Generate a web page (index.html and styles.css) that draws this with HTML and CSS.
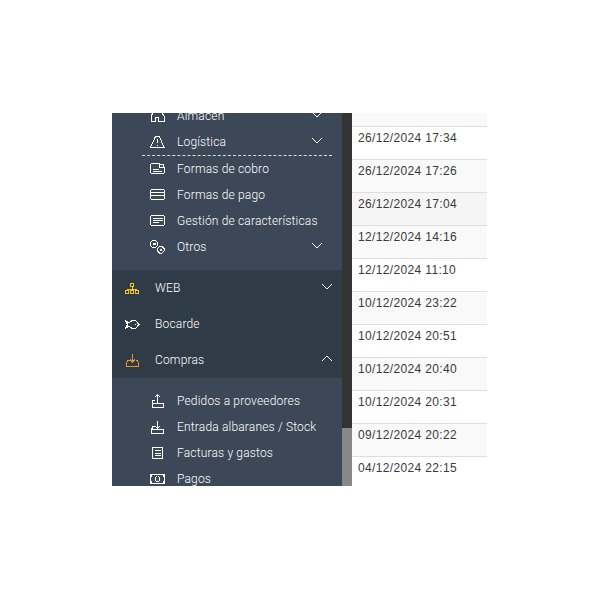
FILE: index.html
```html
<!DOCTYPE html>
<html lang="es">
<head>
    <meta charset="UTF-8">
    <meta name="viewport" content="width=device-width, initial-scale=1.0">
    <title>Menú</title>
    <link rel="stylesheet" href="styles.css">
</head>
<body>
    <div class="frame">
        <!-- Sidebar -->
        <div class="sidebar">
            <ul class="menu sub sub-first">
                <li><svg class="ico" viewBox="0 0 15 15"><path d="M3.500 3.500 1 7v5.500h4.500v-4h3v4H14V7l-2.500-3.500zM3.500 3.500h8"/></svg><span class="label">Almacén</span><svg class="chev" viewBox="0 0 12 7"><path d="M1 1l5 5 5-5"/></svg></li>
                <li><svg class="ico" viewBox="0 0 15 15"><path d="M5.500 1.500h4L14 12.500H.5zM7.500 4v4M7.500 9.500v1.500"/></svg><span class="label">Logística</span><svg class="chev" viewBox="0 0 12 7"><path d="M1 1l5 5 5-5"/></svg></li>
                <li class="sep"></li>
                <li><svg class="ico" viewBox="0 0 15 15"><path d="M9.500 1.500h-8l-1 1v8l1 1h12l1-1V5M2.500 7.500h6M2.500 9.500h9M9.500 2.500h4v2.500h-4z"/></svg><span class="label">Formas de cobro</span></li>
                <li><svg class="ico" viewBox="0 0 15 15"><path d="M1.500 1.500h12l1 1v8l-1 1h-12l-1-1v-8zM.5 4.500h14M.5 7.500h14"/></svg><span class="label">Formas de pago</span></li>
                <li><svg class="ico" viewBox="0 0 15 15"><path d="M1.500 1.500h12l1 1v8l-1 1h-12l-1-1v-8zM2.500 4.500h10M2.500 6.500h10M2.500 8.500h6"/></svg><span class="label">Gestión de características</span></li>
                <li><svg class="ico" viewBox="0 0 15 15"><path d="M2.500.5h3l2 2v3l-2 2h-3l-2-2v-3zM3.500 3h1.500v1.500H3.500zM9.500 6.500h2.500l2 2v2.500l-2 2H9.500l-2-2V8.500zM10 9h1.500v1.500H10z"/></svg><span class="label">Otros</span><svg class="chev" viewBox="0 0 12 7"><path d="M1 1l5 5 5-5"/></svg></li>
            </ul>
            <ul class="menu top">
                <li><svg class="ico yellow" viewBox="0 0 15 15"><path d="M5.500 2.500h3v3h-3zM7 5.500v3M2 8.500h10M2 8.500v1M12 8.500v1M.5 9.500h3v3h-3zM5.500 9.500h3v3h-3zM10.500 9.500h3v3h-3z"/></svg><span class="label">WEB</span><svg class="chev" viewBox="0 0 12 7"><path d="M1 1l5 5 5-5"/></svg></li>
                <li><svg class="ico" viewBox="0 0 15 15"><path d="M.5 3.500 4 6l3-2.500h3.500L14 7.500l-3.500 4H7L4 9l-3.500 2.500 2-4zM10.500 6.500v1"/></svg><span class="label">Bocarde</span></li>
                <li><svg class="ico orange" viewBox="0 0 15 15"><path d="M7.500 1v8M5 6.500 7.500 9 10 6.500M4.500 7.500h-2l-1 2.500v3.500h12V10l-1-2.500h-2"/></svg><span class="label">Compras</span><svg class="chev" viewBox="0 0 12 7"><path d="M1 6l5-5 5 5"/></svg></li>
            </ul>
            <ul class="menu sub sub-last">
                <li><svg class="ico" viewBox="0 0 15 15"><path d="M7.500.5v8M5 3 7.500.5 10 3M5 6.500H2.500v6.500h11V9.500h-11"/></svg><span class="label">Pedidos a proveedores</span></li>
                <li><svg class="ico" viewBox="0 0 15 15"><path d="M7.500.5v8M5 6l2.500 2.500L10 6M5 6.500H3L1.500 9.500V13h12V9.500h-12"/></svg><span class="label">Entrada albaranes / Stock</span></li>
                <li><svg class="ico" viewBox="0 0 15 15"><path d="M2.500 1.500h9.500v11H2.500zM4.500 4.500h6M4.500 7h6M4.500 9.500h6"/></svg><span class="label">Facturas y gastos</span></li>
                <li><svg class="ico" viewBox="0 0 15 15"><path d="M.5 2.500h14v9H.5zM7.500 4.500a2.500 2.500 0 1 0 .01 0M.5 5l2-2.500M14.500 5l-2-2.500M.5 9l2 2.500M14.500 9l-2 2.500"/></svg><span class="label">Pagos</span></li>
            </ul>
        </div>

        <!-- Scrollbar -->
        <div class="scrollbar"><div class="thumb"></div></div>

        <!-- Date table -->
        <div class="dates">
            <div class="row first"></div>
            <div class="row">26/12/2024 17:34</div>
            <div class="row odd">26/12/2024 17:26</div>
            <div class="row hover">26/12/2024 17:04</div>
            <div class="row odd">12/12/2024 14:16</div>
            <div class="row">12/12/2024 11:10</div>
            <div class="row odd">10/12/2024 23:22</div>
            <div class="row">10/12/2024 20:51</div>
            <div class="row odd">10/12/2024 20:40</div>
            <div class="row">10/12/2024 20:31</div>
            <div class="row odd">09/12/2024 20:22</div>
            <div class="row">04/12/2024 22:15</div>
        </div>
    </div>
</body>
</html>
```

FILE: styles.css
```css
body {
    margin: 0;
    background-color: white;
    font-family: Roboto, Arial, sans-serif;
}
ul {
    list-style: none;
    margin: 0;
    padding: 0;
}
.frame {
    display: flex;
    width: 375px;
    height: 373px;
    margin: 113px 0 0 112px;
    overflow: hidden;
}
/* Sidebar */
.sidebar {
    width: 230px;
    flex: none;
    background-color: #3c4858;
    color: #fff;
    font-size: 12px;
    font-weight: 300;
    letter-spacing: 0.17px;
    overflow: hidden;
}
.menu li {
    display: flex;
    align-items: center;
}
.sub li {
    height: 26px;
    padding: 0 19px 0 38px;
}
.sub-first {
    margin-top: -10px;
}
.sub-first .sep {
    height: 0;
    margin: 0 10px 0 30px;
    padding: 0;
    border-top: 1px dashed #d8dde3;
}
.sub-last {
    padding-top: 10px;
}
.top {
    margin-top: 10px;
    background-color: #2f3b47;
}
.top li {
    height: 36px;
    padding: 0 9px 0 13px;
}
.ico {
    width: 15px;
    height: 15px;
    flex: none;
    margin-right: 12px;
    fill: none;
    stroke: #fff;
    stroke-width: 1;
    shape-rendering: crispEdges;
}
.top .ico {
    margin-right: 15px;
}
.ico.yellow {
    stroke: #f5c518;
}
.ico.orange {
    stroke: #f0922b;
}
.label {
    flex: 1;
    white-space: nowrap;
}
.chev {
    width: 12px;
    height: 7px;
    margin-bottom: 4px;
    flex: none;
    fill: none;
    stroke: #fff;
    stroke-width: 1;
    shape-rendering: crispEdges;
}
/* Scrollbar */
.scrollbar {
    width: 10px;
    flex: none;
    padding-top: 315px;
    box-sizing: border-box;
    background-color: #333;
}
.thumb {
    height: 58px;
    background-color: #888;
}
/* Dates */
.dates {
    flex: 1;
    font-family: "Liberation Sans", Arial, sans-serif;
    font-size: 12px;
    letter-spacing: 0.35px;
    color: #3a3a3a;
}
.row {
    height: 29px;
    padding: 3px 0 0 6px;
    border-top: 1px solid #ddd;
    line-height: 16px;
}
.row.first {
    height: 13px;
    padding: 0;
    border-top: 0;
    background-color: #f9f9f9;
}
.row.odd {
    background-color: #f9f9f9;
}
.row.hover {
    background-color: #f5f5f5;
}
```
